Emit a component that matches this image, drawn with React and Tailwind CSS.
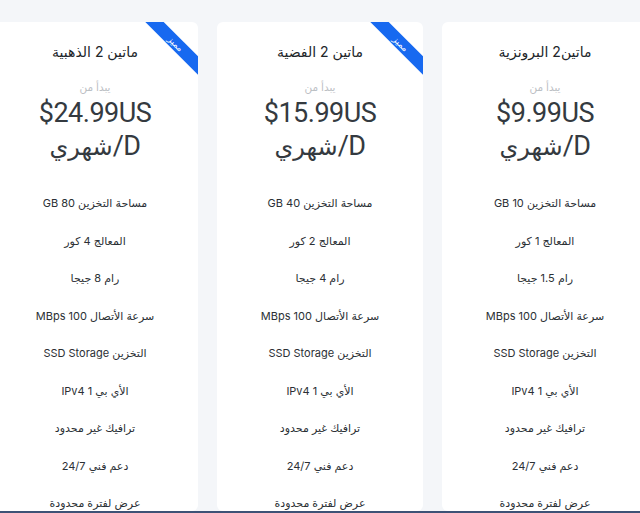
const plans = [
  {
    name: 'ماتين2 البرونزية',
    price: '$9.99US',
    featured: false,
    features: ['مساحة التخزين GB 10', 'المعالج 1 كور', 'رام 1.5 جيجا'],
  },
  {
    name: 'ماتين 2 الفضية',
    price: '$15.99US',
    featured: true,
    features: ['مساحة التخزين GB 40', 'المعالج 2 كور', 'رام 4 جيجا'],
  },
  {
    name: 'ماتين 2 الذهبية',
    price: '$24.99US',
    featured: true,
    features: ['مساحة التخزين GB 80', 'المعالج 4 كور', 'رام 8 جيجا'],
  },
]

const common = [
  'سرعة الأتصال MBps 100',
  'التخزين SSD Storage',
  'الأي بي IPv4 1',
  'ترافيك غير محدود',
  'دعم فني 24/7',
  'عرض لفترة محدودة',
]

const Ribbon = () => (
  <div className="absolute top-[15px] right-[-28px] w-[100px] h-[13px] rotate-45 bg-[#1769f0] flex items-center justify-center">
    <span className="text-white text-[9px] leading-none">مميز</span>
  </div>
)

const Card = ({ plan }) => (
  <div className="relative w-[206px] shrink-0 bg-white rounded-md overflow-hidden text-center pt-[18px]">
    {plan.featured && <Ribbon />}
    <h3 className="text-[14px] leading-6 text-[#212529]">{plan.name}</h3>
    <p className="mt-[16px] text-[10.5px] leading-4 text-[#bcc0c4]">يبدأ من</p>
    <div className="mt-[1px] text-[27px] leading-[33px] tracking-[-0.5px] text-[#343a40] font-['Roboto','DejaVu_Sans',sans-serif]">
      <div>{plan.price}</div>
      <div>
        D/<span className="text-[24px]">شهري</span>
      </div>
    </div>
    <ul className="mt-[29px] flex flex-col gap-[17.5px] text-[11px] leading-5 text-[#2b3035]">
      {[...plan.features, ...common].map((f, i) => (
        <li key={i}>{f}</li>
      ))}
    </ul>
  </div>
)

export default function App() {
  return (
    <div
      dir="rtl"
      className="h-[513px] w-[640px] flex flex-col overflow-hidden bg-[#f4f6f9]"
      style={{ fontFamily: '"Inter", "DejaVu Sans", sans-serif' }}
    >
      <div className="flex-1 overflow-hidden flex justify-center gap-[19px] pt-[22px]">
        {plans.map((p, i) => (
          <Card key={i} plan={p} />
        ))}
      </div>
      <div className="h-[2px] bg-[#3d5276]" />
    </div>
  )
}
